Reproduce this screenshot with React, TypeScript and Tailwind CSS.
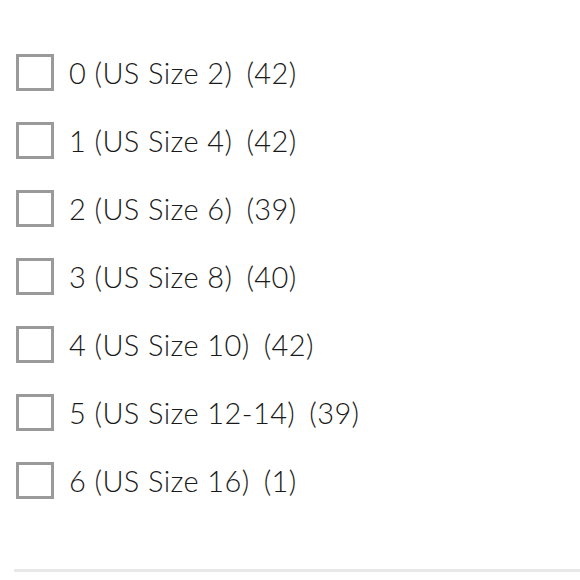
import React from "react";

const items = [
  { label: "0 (US Size 2)", count: 42 },
  { label: "1 (US Size 4)", count: 42 },
  { label: "2 (US Size 6)", count: 39 },
  { label: "3 (US Size 8)", count: 40 },
  { label: "4 (US Size 10)", count: 42 },
  { label: "5 (US Size 12-14)", count: 39 },
  { label: "6 (US Size 16)", count: 1 },
];

export default function App() {
  return (
    <div className="w-[580px] h-[580px] bg-white overflow-hidden" style={{ fontFamily: "Lato, 'Noto Sans', sans-serif" }}>
      <div className="pt-[38px] pl-[16px]">
        {items.map((it) => (
          <label key={it.label} className="flex items-center h-[68px] cursor-pointer">
            <span className="w-[38px] h-[37px] border-[3px] border-[#9a9a9a] bg-white shrink-0" />
            <span className="ml-[15px] text-[29px] font-light tracking-[0.4px] leading-none text-[#1a1a1a] whitespace-nowrap">
              {it.label}
              <span className="ml-[14px]">({it.count})</span>
            </span>
          </label>
        ))}
      </div>
      <div className="mt-[55px] ml-[14px] h-[3px] bg-[#e8e8e8]" />
    </div>
  );
}
